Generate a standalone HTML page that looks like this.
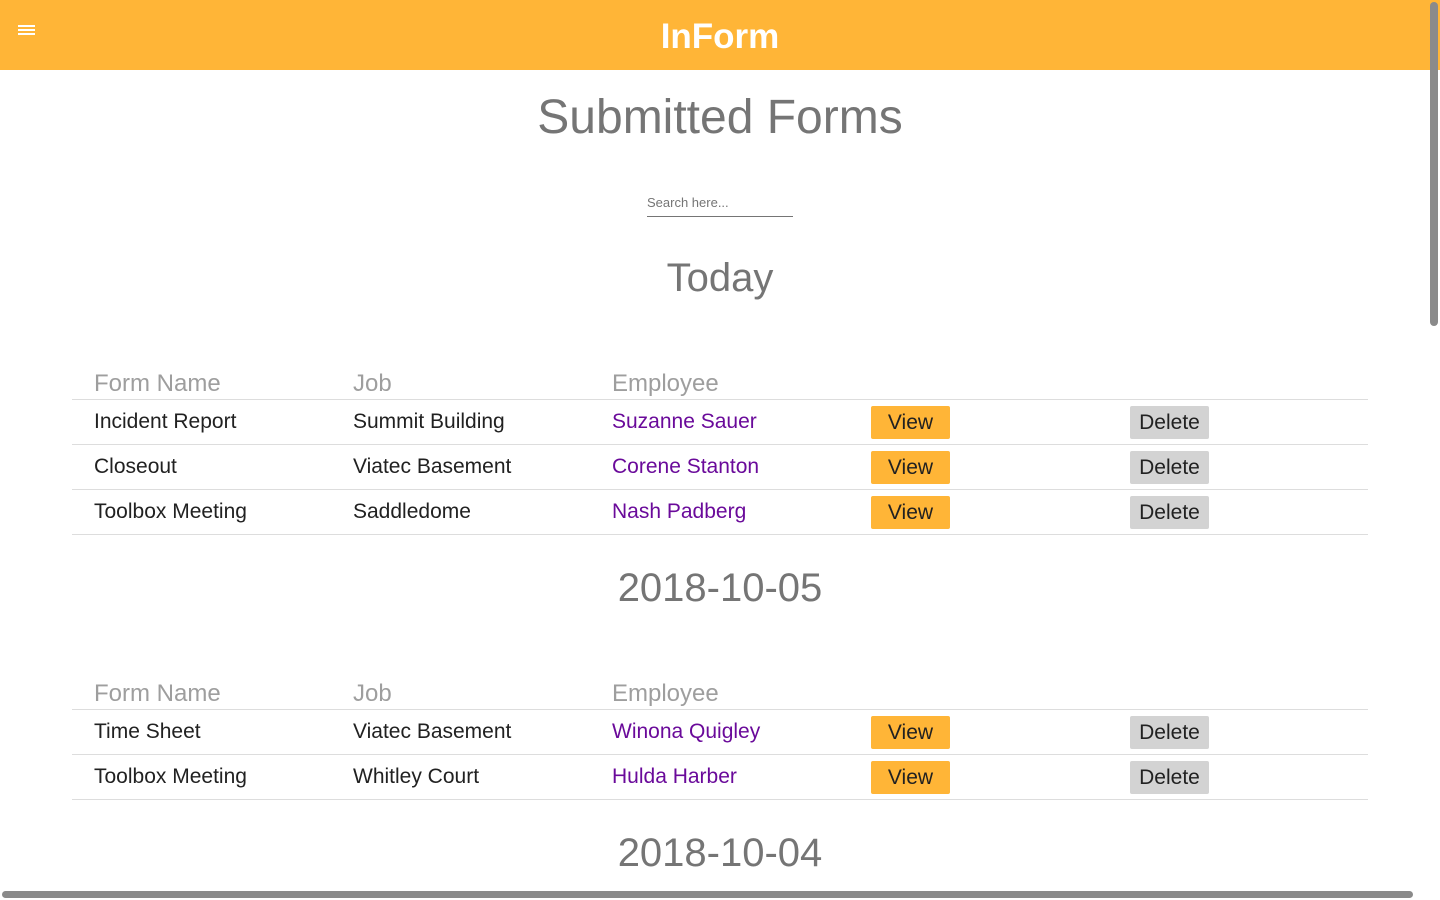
<!DOCTYPE html>
<html><head><meta charset="utf-8"><style>
*{margin:0;padding:0;box-sizing:border-box}
body{width:1440px;height:900px;overflow:hidden;background:#fff;font-family:"Liberation Sans",sans-serif;position:relative}
.a{position:absolute;white-space:nowrap}
.hdr{position:absolute;left:0;top:0;width:1440px;height:70px;background:#FFB537}
.c{left:0;width:1440px;text-align:center;color:#757575}
.th{font-size:24px;color:#9e9e9e}
.td{font-size:21px;color:#212121}
.p{color:#6a0a9a}
.line{position:absolute;left:72px;width:1296px;height:1px;background:#ddd}
.btn{position:absolute;width:79px;height:33px;border-radius:2px;font-size:21px;text-align:center;line-height:33px;color:#212121}
.v{background:#FFB537}.d{background:#d3d3d3}
</style></head><body>
<div class="hdr"></div>
<div class="a" style="left:18px;top:25px;width:17px;height:2px;background:#fff"></div>
<div class="a" style="left:18px;top:29px;width:17px;height:2px;background:#fff"></div>
<div class="a" style="left:18px;top:33px;width:17px;height:2px;background:#fff"></div>
<div class="a c" style="top:17px;font-size:35px;font-weight:bold;color:#fff">InForm</div>
<div class="a c" style="top:90px;font-size:48px">Submitted Forms</div>
<div class="a" style="left:647px;top:195px;font-size:13px;color:#757575">Search here...</div>
<div class="a" style="left:647px;top:216px;width:146px;height:1px;background:#757575"></div>
<div class="a c" style="top:256px;font-size:40px">Today</div>

<div class="a th" style="left:94px;top:370px">Form Name</div>
<div class="a th" style="left:353px;top:370px">Job</div>
<div class="a th" style="left:612px;top:370px">Employee</div>
<div class="line" style="top:399px"></div>
<div class="a td" style="left:94px;top:410px">Incident Report</div>
<div class="a td" style="left:353px;top:410px">Summit Building</div>
<div class="a td p" style="left:612px;top:410px">Suzanne Sauer</div>
<div class="btn v" style="left:871px;top:406px">View</div><div class="btn d" style="left:1130px;top:406px">Delete</div>
<div class="line" style="top:444px"></div>
<div class="a td" style="left:94px;top:455px">Closeout</div>
<div class="a td" style="left:353px;top:455px">Viatec Basement</div>
<div class="a td p" style="left:612px;top:455px">Corene Stanton</div>
<div class="btn v" style="left:871px;top:451px">View</div><div class="btn d" style="left:1130px;top:451px">Delete</div>
<div class="line" style="top:489px"></div>
<div class="a td" style="left:94px;top:500px">Toolbox Meeting</div>
<div class="a td" style="left:353px;top:500px">Saddledome</div>
<div class="a td p" style="left:612px;top:500px">Nash Padberg</div>
<div class="btn v" style="left:871px;top:496px">View</div><div class="btn d" style="left:1130px;top:496px">Delete</div>
<div class="line" style="top:534px"></div>

<div class="a c" style="top:566px;font-size:40px">2018-10-05</div>
<div class="a th" style="left:94px;top:680px">Form Name</div>
<div class="a th" style="left:353px;top:680px">Job</div>
<div class="a th" style="left:612px;top:680px">Employee</div>
<div class="line" style="top:709px"></div>
<div class="a td" style="left:94px;top:720px">Time Sheet</div>
<div class="a td" style="left:353px;top:720px">Viatec Basement</div>
<div class="a td p" style="left:612px;top:720px">Winona Quigley</div>
<div class="btn v" style="left:871px;top:716px">View</div><div class="btn d" style="left:1130px;top:716px">Delete</div>
<div class="line" style="top:754px"></div>
<div class="a td" style="left:94px;top:765px">Toolbox Meeting</div>
<div class="a td" style="left:353px;top:765px">Whitley Court</div>
<div class="a td p" style="left:612px;top:765px">Hulda Harber</div>
<div class="btn v" style="left:871px;top:761px">View</div><div class="btn d" style="left:1130px;top:761px">Delete</div>
<div class="line" style="top:799px"></div>
<div class="a c" style="top:831px;font-size:40px">2018-10-04</div>

<div class="a" style="left:1430px;top:2px;width:8px;height:324px;border-radius:4px;background:#8a8a8a"></div>
<div class="a" style="left:2px;top:891px;width:1411px;height:7px;border-radius:4px;background:#8a8a8a"></div>
</body></html>
